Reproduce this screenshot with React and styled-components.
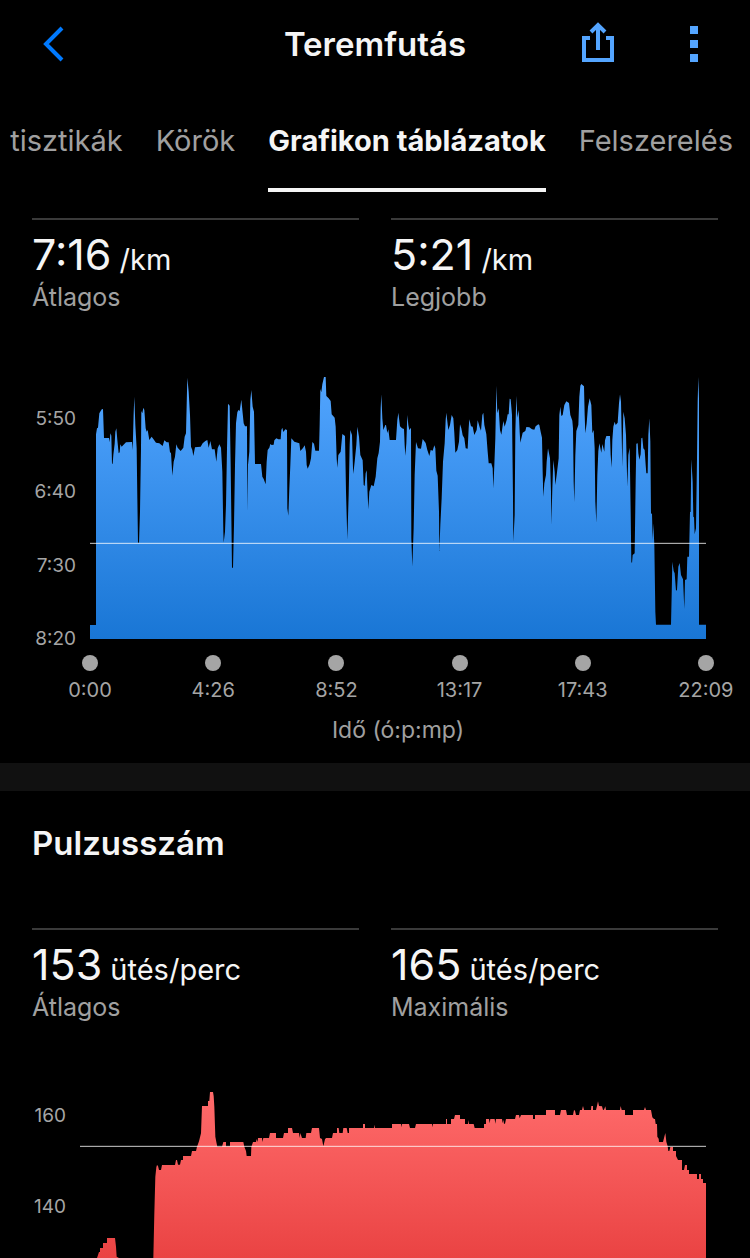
import React from 'react';
import styled, { createGlobalStyle } from 'styled-components';

const GlobalStyle = createGlobalStyle`
* {
  box-sizing: border-box;
}
body {
  margin: 0;
  background: #000000;
  color: #F5F5F5;
  font-family: Inter, "Liberation Sans", sans-serif;
  overflow-x: hidden;
}
`;

// chart units: three per pixel, y grows downwards from the top of the plot
const paceSegments = [
  {
    start: -30,
    points: [
      [30, 780], [48, 780], [48, 208], [51, 190], [54, 188], [58, 145], [62, 138], [66, 132], [69, 133],
      [72, 219], [87, 219], [89, 232], [91, 205], [94, 212], [96, 296], [98, 296], [100, 270], [104, 236],
      [106, 200], [109, 190], [112, 225], [116, 265], [119, 262], [121, 238], [125, 245], [130, 240],
      [138, 232], [156, 231], [158, 255], [161, 145], [163, 95], [166, 180], [170, 250], [172, 400],
      [174, 533], [177, 533], [180, 440], [183, 250], [184, 138], [187, 145], [190, 128], [193, 135],
      [197, 190], [200, 200], [203, 195], [208, 225], [215, 215], [220, 222], [228, 233], [238, 235],
      [248, 243], [253, 226], [260, 232], [266, 232], [270, 262], [273, 264], [277, 332], [281, 290],
      [285, 275], [289, 238], [293, 248], [302, 258], [310, 248], [314, 215], [318, 205], [320, 120],
      [322, 38], [326, 80], [330, 150], [333, 245], [337, 255], [340, 273], [345, 247], [362, 245],
      [368, 235], [376, 228], [382, 225], [386, 248], [391, 228], [396, 253], [404, 253], [409, 290],
      [413, 250], [418, 238], [423, 248], [427, 320], [430, 500], [431, 533], [435, 500], [438, 420],
      [441, 250], [444, 116], [449, 122], [452, 300], [456, 608], [459, 608],
    ],
  },
  {
    start: 420,
    points: [
      [12, 480], [15, 300], [18, 175], [22, 142], [25, 135], [29, 138], [34, 104], [38, 145], [41, 175],
      [45, 184], [51, 184], [52, 440], [54, 300], [58, 260], [61, 105], [64, 75], [68, 125], [72, 140],
      [75, 297], [93, 297], [97, 335], [101, 342], [107, 358], [110, 290], [113, 255], [118, 248],
      [121, 237], [125, 240], [131, 239], [133, 226], [139, 220], [145, 223], [152, 223], [154, 195],
      [157, 188], [160, 201], [166, 193], [171, 195], [172, 430], [175, 452], [178, 370], [181, 300],
      [184, 220], [188, 224], [193, 230], [208, 235], [211, 258], [219, 249], [224, 241], [228, 260],
      [230, 300], [233, 311], [239, 298], [243, 280], [247, 231], [252, 236], [256, 257], [267, 257],
      [269, 180], [271, 72], [274, 82], [277, 58], [282, 36], [287, 36], [289, 93], [296, 100],
      [302, 108], [305, 148], [314, 158], [317, 185], [320, 280], [322, 308], [325, 270], [332, 260],
      [337, 207], [345, 213], [348, 380], [352, 524], [356, 390], [359, 240], [361, 195], [366, 210],
      [369, 310], [370, 327], [374, 290], [379, 240], [382, 185], [387, 215], [391, 270], [398, 286],
      [401, 360], [404, 363], [407, 325], [410, 316], [413, 390], [415, 433], [418, 380], [424, 360],
      [431, 364], [437, 335], [442, 280], [446, 264], [450, 230], [452, 130], [454, 88], [457, 160],
      [460, 195], [466, 180],
    ],
  },
  {
    start: 870,
    points: [
      [18, 180], [22, 204], [25, 193], [29, 225], [48, 225], [52, 165], [55, 143], [60, 184], [66, 190],
      [72, 192], [74, 240], [76, 272], [79, 235], [82, 150], [85, 180], [88, 195], [93, 188], [94, 520],
      [97, 605], [101, 490], [104, 330], [108, 231], [114, 250], [123, 251], [128, 222], [137, 234],
      [142, 255], [148, 273], [152, 255], [158, 257], [163, 241], [166, 250], [169, 317], [173, 332],
      [177, 440], [178, 558], [181, 480], [185, 400], [189, 290], [194, 235], [197, 165], [199, 143],
      [205, 195], [210, 180], [215, 150], [220, 160], [223, 205], [226, 263], [232, 255], [237, 230],
      [240, 178], [244, 190], [248, 211], [253, 220], [257, 250], [263, 251], [266, 190], [268, 163],
      [273, 184], [278, 185], [283, 210], [290, 195], [293, 166], [299, 187], [303, 197], [307, 150],
      [310, 143], [313, 180], [319, 208], [323, 260], [326, 295], [334, 295], [338, 310], [340, 370],
      [343, 300], [346, 220], [348, 120], [349, 62], [352, 145], [356, 130], [360, 195], [364, 209],
      [370, 168], [374, 185], [380, 165], [383, 148], [386, 148], [389, 101], [392, 103], [396, 150],
      [399, 400], [400, 530], [404, 450], [406, 200], [409, 92], [412, 158], [416, 135], [419, 200],
      [421, 233], [428, 203], [436, 198], [439, 186], [448, 187], [456, 193], [463, 194], [467, 184],
      [475, 178],
    ],
  },
  {
    start: 1320,
    points: [
      [28, 180], [32, 200], [36, 218], [38, 320], [40, 395], [43, 355], [48, 330], [50, 290], [54, 250],
      [60, 280], [63, 380], [64, 480], [67, 370], [70, 285], [74, 320], [76, 360], [80, 330], [86, 280],
      [88, 150], [91, 125], [94, 153], [98, 150], [103, 120], [109, 109], [117, 114], [121, 150],
      [127, 167], [129, 190], [131, 350], [133, 410], [136, 270], [139, 198], [145, 180], [148, 95],
      [151, 62], [154, 57], [162, 64], [164, 150], [166, 205], [170, 175], [174, 125], [179, 100],
      [184, 120], [187, 205], [191, 195], [194, 250], [196, 410], [199, 473], [202, 330], [205, 258],
      [208, 235], [214, 263], [217, 237], [223, 260], [225, 226], [229, 213], [240, 213], [242, 270],
      [245, 308], [247, 225], [250, 185], [254, 170], [257, 180], [263, 173], [267, 115], [270, 88],
      [273, 110], [277, 305], [280, 140], [284, 160], [288, 210], [292, 365], [295, 270], [299, 248],
      [302, 440], [304, 590], [306, 595], [308, 570], [314, 565], [317, 350], [319, 236], [323, 235],
      [325, 265], [328, 284], [332, 268], [334, 220], [337, 218], [340, 250], [344, 255], [347, 300],
      [349, 325], [353, 325], [355, 210], [358, 160], [361, 230], [363, 445], [366, 447], [368, 525],
      [370, 475], [373, 540], [376, 740], [378, 779], [423, 779], [425, 690], [427, 590], [431, 618],
      [434, 625], [438, 677], [441, 675], [445, 605], [449, 594], [453, 630], [459, 643], [463, 732],
      [465, 645], [470, 643], [472, 575], [477, 575], [480, 442], [482, 440], [484, 282], [488, 350],
      [490, 455], [492, 457], [494, 508], [498, 490], [501, 280], [503, 110], [505, 36], [507, 100],
      [507, 779], [528, 779],
    ],
  },
];

const heartSegments = [
  {
    start: 0,
    points: [
      [51, 534], [57, 516], [60, 516], [60, 504], [69, 504], [69, 489], [81, 489], [81, 474], [105, 474],
      [108, 500], [110, 530], [117, 534], [220, 534], [223, 400], [226, 290], [229, 262], [231, 255],
      [234, 258], [237, 270], [243, 270], [246, 255], [285, 255], [288, 240], [291, 240], [294, 254],
      [300, 254], [303, 240], [309, 240], [309, 228], [333, 228], [336, 213], [348, 213], [351, 200],
      [357, 184], [363, 160], [366, 78], [384, 78], [384, 63], [388, 63], [390, 36], [399, 36], [401, 48],
      [403, 80], [406, 170], [409, 186], [412, 200], [426, 200], [430, 186], [438, 186], [438, 199],
      [450, 199], [450, 186], [490, 186], [493, 200], [498, 213], [500, 228], [513, 228], [514, 201],
      [519, 186], [528, 186], [530, 177], [533, 186], [534, 174], [546, 174], [547, 186], [550, 174],
      [567, 174], [570, 159], [588, 159], [588, 174], [609, 174], [612, 159], [624, 159], [624, 144],
      [636, 144], [639, 159], [657, 159], [659, 174], [661, 159], [666, 174], [677, 174], [679, 159],
      [693, 159], [696, 144], [717, 144], [720, 174], [726, 177], [730, 199], [735, 178], [738, 174],
      [756, 174], [759, 159], [771, 159], [771, 144], [776, 144], [778, 159],
    ],
  },
  {
    start: 750,
    points: [
      [38, 159], [40, 144], [50, 144], [53, 159], [57, 159], [57, 144], [99, 144], [99, 132],
      [105, 132], [105, 144], [132, 144], [133, 134], [135, 144], [186, 144], [186, 132], [213, 132],
      [214, 142], [216, 132], [237, 132], [240, 144], [255, 144], [258, 132], [306, 132], [307, 142],
      [309, 132], [348, 132], [348, 117], [351, 117], [351, 132], [363, 132], [363, 117], [372, 117],
      [375, 105], [390, 105], [390, 117], [405, 117], [405, 132], [414, 132], [415, 120], [417, 132],
      [431, 132], [434, 144], [462, 144], [462, 132], [468, 132], [468, 117], [477, 117], [479, 130],
      [481, 117], [494, 117], [496, 131], [498, 117], [516, 117], [518, 130], [520, 119], [522, 131],
      [525, 131], [528, 117], [555, 117], [558, 105], [567, 105], [569, 115], [573, 105], [609, 105],
      [609, 117], [615, 117], [615, 105], [648, 105], [648, 90], [675, 90], [675, 105], [690, 105],
      [693, 90], [708, 90], [711, 105], [729, 105],
    ],
  },
  {
    start: 1470,
    points: [
      [9, 105], [12, 90], [15, 92], [18, 105], [27, 105], [30, 90], [36, 90], [39, 78], [42, 90],
      [63, 90], [64, 78], [69, 78], [69, 90], [78, 90], [81, 78], [84, 64], [87, 78], [96, 79], [99, 90],
      [102, 89], [106, 79], [108, 90], [150, 90], [152, 78], [155, 90], [165, 90], [165, 105], [189, 105],
      [189, 90], [222, 90], [225, 81], [228, 90], [243, 90], [247, 112], [252, 117], [255, 117],
      [257, 132], [261, 132], [262, 170], [266, 176], [267, 186], [279, 186], [283, 170], [286, 159],
      [289, 185], [293, 199], [295, 213], [298, 213], [301, 201], [309, 201], [309, 213], [318, 213],
      [318, 228], [324, 240], [336, 240], [336, 270], [342, 270], [345, 255], [351, 255], [351, 270],
      [357, 270], [357, 282], [381, 282], [381, 297], [387, 297], [387, 282], [393, 282], [393, 297],
      [399, 297], [399, 309], [408, 309],
    ],
  },
];

const paceTicks = ['5:50', '6:40', '7:30', '8:20'];
const heartTicks = ['160', '140'];
const timeTicks = ['0:00', '4:26', '8:52', '13:17', '17:43', '22:09'];

const areaPath = (segments, height) => {
  const points = segments.flatMap(({ start, points: list }) => list.map(([x, y]) => [x + start, y]));
  const first = points[0][0];
  const last = points[points.length - 1][0];
  return `M${first} ${height}L${points.map((p) => p.join(' ')).join('L')}L${last} ${height}Z`;
};

const Header = styled.header`
display: grid;
grid-template-columns: 1fr auto 1fr;
align-items: center;
height: 88px;
padding: 0 32px;
`;

const Title = styled.h1`
margin: 0;
font-size: 33px;
line-height: 40px;
font-weight: 600;
`;

const Actions = styled.div`
display: flex;
justify-content: flex-end;
gap: 52px;
padding-right: 2px;
`;

const IconButton = styled.button`
display: flex;
align-items: center;
justify-content: center;
width: 44px;
height: 44px;
padding: 0;
border: 0;
background: none;
color: ${({ $color }) => $color};
`;

const Tabs = styled.nav`
display: flex;
justify-content: flex-end;
gap: 33px;
height: 104px;
padding: 0 17px 0 0;
overflow: hidden;
`;

const Tab = styled.a`
flex: none;
padding-top: 33px;
border-bottom: 4px solid ${({ $active }) => ($active ? '#F5F5F5' : 'transparent')};
font-size: 29px;
line-height: 40px;
font-weight: ${({ $active }) => ($active ? 700 : 400)};
color: ${({ $active }) => ($active ? '#F5F5F5' : '#A0A0A0')};
text-decoration: none;
white-space: nowrap;
`;

const Section = styled.section`
padding-top: ${({ $top }) => $top}px;
`;

const SectionTitle = styled.h2`
margin: 0 0 65px;
padding: 0 32px;
font-size: 33px;
line-height: 40px;
font-weight: 600;
`;

const Stats = styled.div`
display: grid;
grid-template-columns: 1fr 1fr;
gap: 32px;
padding: 0 32px;
`;

const Stat = styled.div`
border-top: 2px solid #3A3A3A;
padding-top: 12px;
`;

const StatValue = styled.div`
font-size: 43px;
line-height: 44px;
`;

const StatUnit = styled.span`
font-size: 29px;
`;

const StatLabel = styled.div`
font-size: 25px;
line-height: 30px;
color: #A0A0A0;
`;

const ChartRow = styled.div`
display: grid;
grid-template-columns: ${({ $axis }) => $axis}px 1fr;
margin-top: ${({ $top }) => $top}px;
padding-right: 44px;
`;

const YAxis = styled.div`
display: flex;
flex-direction: column;
justify-content: space-between;
margin: ${({ $margin }) => $margin};
padding-right: 14px;
font-size: 19px;
line-height: 24px;
text-align: right;
color: #A5A5A5;
`;

const Plot = styled.svg`
display: block;
width: 100%;
height: ${({ $height }) => $height}px;
`;

const XAxis = styled.div`
display: flex;
justify-content: space-between;
padding: 16px 14px 0 60px;
`;

const XTick = styled.div`
display: flex;
flex-direction: column;
align-items: center;
gap: 7px;
width: 60px;
font-size: 20px;
line-height: 24px;
color: #A5A5A5;
`;

const Dot = styled.span`
width: 16px;
height: 16px;
border-radius: 50%;
background: #A5A5A5;
`;

const AxisTitle = styled.div`
margin: 12px 0 17px;
padding: 0 44px 0 90px;
font-size: 23px;
line-height: 32px;
text-align: center;
color: #A0A0A0;
`;

const Divider = styled.hr`
height: 28px;
margin: 0;
border: 0;
background: #111111;
`;

const BackIcon = () => (
  <svg width="44" height="44" viewBox="0 0 44 44" fill="none" aria-hidden="true">
    <path d="M30 6L14 22L30 38" stroke="currentColor" strokeWidth="4" />
  </svg>
);

const ShareIcon = () => (
  <svg width="44" height="44" viewBox="0 0 44 44" fill="none" aria-hidden="true">
    <path d="M14 16H8V38H36V16H30" stroke="currentColor" strokeWidth="4" />
    <path d="M22 28V4M15 10L22 3L29 10" stroke="currentColor" strokeWidth="4" />
  </svg>
);

const MoreIcon = () => (
  <svg width="44" height="44" viewBox="0 0 44 44" fill="currentColor" aria-hidden="true">
    <path d="M18 4h8v8h-8zM18 18h8v8h-8zM18 32h8v8h-8z" />
  </svg>
);

const StatBlock = ({ value, unit, label }) => (
  <Stat>
    <StatValue>
      {value}
      <StatUnit>
        {' '}
        {unit}
      </StatUnit>
    </StatValue>
    <StatLabel>{label}</StatLabel>
  </Stat>
);

const AreaPlot = ({
  id, segments, width, height, average, from, to, label,
}) => (
  <Plot
    $height={Math.round(height / 3)}
    viewBox={`0 0 ${width} ${height}`}
    preserveAspectRatio="none"
    role="img"
    aria-label={label}
  >
    <defs>
      <linearGradient id={id} x1="0" y1="0" x2="0" y2="1">
        <stop offset="0" stopColor={from} />
        <stop offset="1" stopColor={to} />
      </linearGradient>
    </defs>
    <path d={areaPath(segments, height)} fill={`url(#${id})`} />
    <path d={`M0 ${average}H${width}`} stroke="#FFFFFF" strokeOpacity="0.8" strokeWidth="3" />
  </Plot>
);

const App = () => (
  <>
    <GlobalStyle />
    <Header>
      <IconButton type="button" $color="#007AFF" aria-label="Vissza">
        <BackIcon />
      </IconButton>
      <Title>Teremfutás</Title>
      <Actions>
        <IconButton type="button" $color="#54A5FF" aria-label="Megosztás">
          <ShareIcon />
        </IconButton>
        <IconButton type="button" $color="#54A5FF" aria-label="Továbbiak">
          <MoreIcon />
        </IconButton>
      </Actions>
    </Header>
    <Tabs>
      <Tab href="#stats">tisztikák</Tab>
      <Tab href="#laps">Körök</Tab>
      <Tab href="#charts" $active aria-current="page">Grafikon táblázatok</Tab>
      <Tab href="#gear">Felszerelés</Tab>
    </Tabs>
    <main>
      <Section $top={26}>
        <Stats>
          <StatBlock value="7:16" unit="/km" label="Átlagos" />
          <StatBlock value="5:21" unit="/km" label="Legjobb" />
        </Stats>
        <ChartRow $axis={90} $top={53}>
          <YAxis $margin="42px 0 -12px">
            {paceTicks.map((tick) => <span key={tick}>{tick}</span>)}
          </YAxis>
          <AreaPlot
            id="pace"
            segments={paceSegments}
            width={1848}
            height={822}
            average={535}
            from="#52A5FF"
            to="#1976D5"
            label="Tempó"
          />
        </ChartRow>
        <XAxis>
          {timeTicks.map((tick) => (
            <XTick key={tick}>
              <Dot />
              {tick}
            </XTick>
          ))}
        </XAxis>
        <AxisTitle>Idő (ó:p:mp)</AxisTitle>
      </Section>
      <Divider />
      <Section $top={32}>
        <SectionTitle>Pulzusszám</SectionTitle>
        <Stats>
          <StatBlock value="153" unit="ütés/perc" label="Átlagos" />
          <StatBlock value="165" unit="ütés/perc" label="Maximális" />
        </Stats>
        <ChartRow $axis={80} $top={58}>
          <YAxis $margin="24px 0 39px">
            {heartTicks.map((tick) => <span key={tick}>{tick}</span>)}
          </YAxis>
          <AreaPlot
            id="heart"
            segments={heartSegments}
            width={1878}
            height={534}
            average={199}
            from="#FF6B6B"
            to="#EA4343"
            label="Pulzusszám"
          />
        </ChartRow>
      </Section>
    </main>
  </>
);

export default App;
